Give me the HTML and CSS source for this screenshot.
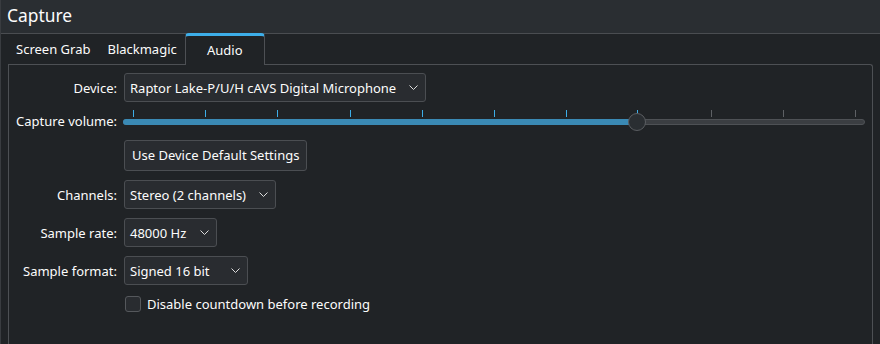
FILE: index.html
```html
<!DOCTYPE html>
<html>
<head>
<meta charset="utf-8">
<link rel="stylesheet" href="styles.css">
</head>
<body>
<div class="window">
  <div class="titlebar">Capture</div>
  <div class="tabs-area">
    <div class="tabbar">
      <div class="tab first">Screen Grab</div>
      <div class="tab second">Blackmagic</div>
      <div class="tab active">Audio</div>
    </div>
    <div class="pane">
      <div class="form">
        <div class="label">Device:</div>
        <div class="combo w-device"><span>Raptor Lake-P/U/H cAVS Digital Microphone</span><svg class="chev" width="9" height="5" viewBox="0 0 9 5"><path d="M0.5 0.5 L4.5 4.5 L8.5 0.5" fill="none" stroke="#dcdcdc" stroke-width="1"/></svg></div>

        <div class="label">Capture volume:</div>
        <div class="slider">
          <svg width="744" height="20" viewBox="0 0 744 20" overflow="visible">
            <g fill="#3daee9">
              <rect x="10" y="-1" width="1" height="7"/>
              <rect x="82" y="-1" width="1" height="7"/>
              <rect x="154" y="-1" width="1" height="7"/>
              <rect x="227" y="-1" width="1" height="7"/>
              <rect x="299" y="-1" width="1" height="7"/>
              <rect x="371" y="-1" width="1" height="7"/>
              <rect x="443" y="-1" width="1" height="7"/>
              <rect x="514" y="-1" width="1" height="7"/>
            </g>
            <g fill="#5e6165">
              <rect x="588" y="-1" width="1" height="7"/>
              <rect x="660" y="-1" width="1" height="7"/>
              <rect x="732" y="-1" width="1" height="7"/>
            </g>
            <rect x="0.5" y="8.5" width="741" height="5" rx="2.5" fill="#3b3e42" stroke="#4e5155"/>
            <rect x="0" y="8" width="514" height="6" rx="3" fill="#3a89b4"/>
            <circle cx="514" cy="11" r="8.5" fill="#2a2e32" stroke="#5a5d61"/>
          </svg>
        </div>

        <div class="label"></div>
        <div class="button">Use Device Default Settings</div>

        <div class="label">Channels:</div>
        <div class="combo w-channels"><span>Stereo (2 channels)</span><svg class="chev" width="9" height="5" viewBox="0 0 9 5"><path d="M0.5 0.5 L4.5 4.5 L8.5 0.5" fill="none" stroke="#dcdcdc" stroke-width="1"/></svg></div>

        <div class="label">Sample rate:</div>
        <div class="combo w-rate"><span>48000 Hz</span><svg class="chev" width="9" height="5" viewBox="0 0 9 5"><path d="M0.5 0.5 L4.5 4.5 L8.5 0.5" fill="none" stroke="#dcdcdc" stroke-width="1"/></svg></div>

        <div class="label">Sample format:</div>
        <div class="combo w-format"><span>Signed 16 bit</span><svg class="chev" width="9" height="5" viewBox="0 0 9 5"><path d="M0.5 0.5 L4.5 4.5 L8.5 0.5" fill="none" stroke="#dcdcdc" stroke-width="1"/></svg></div>

        <div class="label"></div>
        <label class="check"><span class="box"></span><span>Disable countdown before recording</span></label>
      </div>
    </div>
  </div>
</div>
</body>
</html>
```

FILE: styles.css
```css
html, body {
  margin: 0;
  padding: 0;
  background: #202326;
}
body {
  font-family: "Noto Sans", sans-serif;
  font-size: 13px;
  color: #fcfcfc;
  width: 880px;
  height: 344px;
  overflow: hidden;
}
.window {
  height: 344px;
  box-sizing: border-box;
  border-left: 1px solid #393c40;
  display: flex;
  flex-direction: column;
}
.titlebar {
  height: 33px;
  line-height: 31px;
  background: #2a2e32;
  border-bottom: 1px solid #4a4d51;
  padding-left: 6px;
  font-size: 17.4px;
  flex: none;
}
.tabs-area {
  flex: 1;
  display: flex;
  flex-direction: column;
  padding: 0 7px 0 7px;
  min-height: 0;
}
.tabbar {
  display: flex;
  height: 30px;
  flex: none;
  position: relative;
  z-index: 1;
}
.tab {
  padding: 0 9px;
  line-height: 30px;
  color: #fcfcfc;
  white-space: nowrap;
}
.tab.first {
  padding-left: 8px;
  padding-right: 8px;
}
.tab.second {
  padding-right: 8px;
}
.tab.active {
  box-sizing: border-box;
  width: 80px;
  margin-top: -1px;
  height: 32px;
  padding: 0;
  text-align: center;
  line-height: 29px;
  background: #202326;
  border-left: 1px solid #4d5054;
  border-right: 1px solid #4d5054;
  border-top: 3px solid #3daee9;
  border-radius: 4px 4px 0 0;
}
.pane {
  flex: 1;
  border: 1px solid #4d5054;
  border-bottom: none;
  border-radius: 0 3px 0 0;
  padding: 8px 6px 0 0;
}
.form {
  display: grid;
  grid-template-columns: 108px 1fr;
  column-gap: 7px;
  row-gap: 9px;
  align-items: center;
}
.label {
  text-align: right;
  white-space: nowrap;
}
.combo {
  justify-self: start;
  box-sizing: border-box;
  height: 29px;
  display: flex;
  align-items: center;
  justify-content: space-between;
  padding: 0 7px 0 5px;
  background: #292c30;
  border: 1px solid #4b4e52;
  border-radius: 3px;
  white-space: nowrap;
}
.w-device { width: 302px; }
.w-channels { width: 152px; }
.w-rate { width: 93px; }
.w-format { width: 124px; }
.chev {
  display: block;
  flex: none;
}
.slider {
  height: 20px;
}
.slider svg {
  display: block;
  margin-left: -1px;
  overflow: visible;
}
.button {
  justify-self: start;
  box-sizing: border-box;
  height: 31px;
  line-height: 29px;
  padding: 0 7px;
  background: #292c30;
  border: 1px solid #4b4e52;
  border-radius: 3px;
  white-space: nowrap;
}
.check {
  display: flex;
  align-items: center;
  gap: 6px;
  height: 20px;
}
.box {
  box-sizing: border-box;
  width: 16px;
  height: 16px;
  margin-left: 1px;
  background: #292c30;
  border: 1px solid #55585c;
  border-radius: 3px;
}
```
